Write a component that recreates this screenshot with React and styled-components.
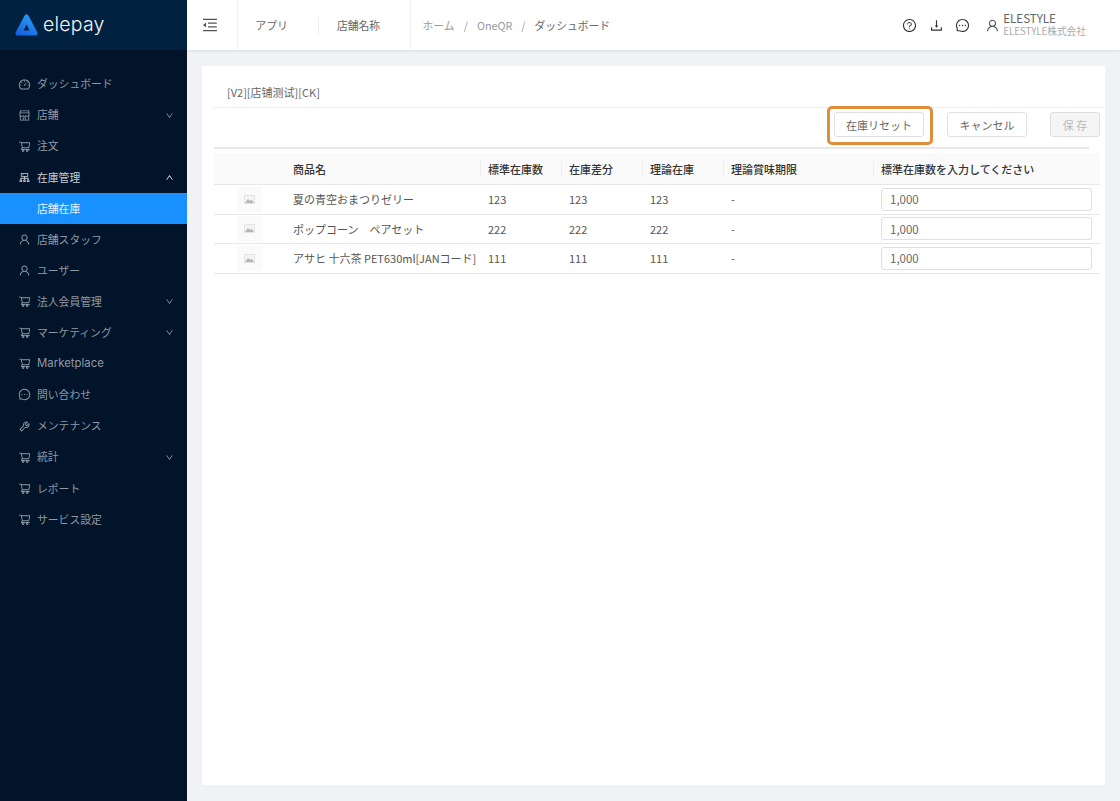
import React from 'react';
import styled, { createGlobalStyle } from 'styled-components';
import {
  AiOutlineDashboard, AiOutlineShop, AiOutlineShoppingCart, AiOutlineCluster, AiOutlineUser,
  AiOutlineMessage, AiOutlineTool, AiOutlineDown, AiOutlineUp, AiOutlineQuestionCircle,
  AiOutlineDownload, AiOutlineMenuFold,
} from 'react-icons/ai';

const Global = createGlobalStyle`
  html, body { margin: 0; padding: 0; height: 100%; }
  body { font-family: "Noto Sans CJK JP", "Noto Sans", sans-serif; background: #f0f2f5; }
  * { box-sizing: border-box; }
`;

const Shell = styled.div`
  display: flex;
  width: 1120px;
  height: 801px;
  overflow: hidden;
`;

const Sidebar = styled.aside`
  width: 187px;
  flex: none;
  background: #011429;
  font-family: Inter, "Noto Sans CJK JP", sans-serif;
`;

const Brand = styled.div`
  height: 50px;
  background: #002140;
  display: flex;
  align-items: center;
  padding-left: 15px;
  gap: 5px;
`;

const BrandName = styled.span`
  font-family: Inter, sans-serif;
  font-size: 19.5px;
  font-weight: 300;
  letter-spacing: 0.2px;
  color: #f2f5f8;
  line-height: 1;
  margin-top: -1px;
`;

const Menu = styled.nav`
  padding-top: 18.5px;
`;

const Item = styled.div`
  height: 31.1px;
  display: flex;
  align-items: center;
  padding: 0 13px 0 ${p => (p.$sub ? 37 : 18)}px;
  font-size: ${p => (p.$latin ? 11.4 : 10.8)}px;
  color: ${p => (p.$active ? '#e6f3ff' : p.$open ? '#c8cdd3' : '#8f99a5')};
  background: ${p => (p.$active ? '#1890ff' : 'transparent')};
`;

const ItemIcon = styled.span`
  width: 19px;
  font-size: 13px;
  display: flex;
  align-items: center;
`;

const ItemLabel = styled.span`
  flex: 1;
  white-space: nowrap;
  margin-top: -1.5px;
`;

const Caret = styled.span`
  display: flex;
  font-size: 9px;
  color: ${p => (p.$open ? '#eef0f2' : '#8f99a5')};
`;

const Main = styled.div`
  flex: 1;
  min-width: 0;
  display: flex;
  flex-direction: column;
`;

const Header = styled.header`
  height: 50px;
  flex: none;
  background: #fff;
  box-shadow: 0 1px 3px rgba(0, 21, 41, 0.1);
  display: flex;
  align-items: center;
  color: #666;
  font-size: 10.8px;
`;

const Toggle = styled.div`
  width: 51px;
  height: 100%;
  display: flex;
  align-items: center;
  justify-content: center;
  padding-right: 5px;
  font-size: 18px;
  color: #555;
  border-right: 1px solid #f0f0f0;
`;

const SwitchGroup = styled.div`
  height: 100%;
  display: flex;
  align-items: center;
  border-right: 1px solid #f0f0f0;
  padding-right: 12px;
`;

const Switch = styled.span`
  padding: 0 17.5px;
  line-height: 17px;
  border-left: ${p => (p.$divided ? '1px solid #efefef' : 'none')};
  margin-left: ${p => (p.$divided ? '13px' : '0')};
`;

const Crumbs = styled.div`
  flex: 1;
  display: flex;
  align-items: center;
  gap: 9px;
  padding-left: 12px;
  color: #999;
`;

const CrumbCurrent = styled.span`
  color: #666;
`;

const Tools = styled.div`
  display: flex;
  align-items: center;
  font-size: 15px;
  color: #333;
  gap: 11.5px;
  margin-right: 1px;
`;

const Account = styled.div`
  display: flex;
  align-items: center;
  margin-left: 14px;
  margin-right: 34px;
  gap: 3px;
`;

const AccountText = styled.div`
  display: flex;
  flex-direction: column;
  line-height: 13px;
  font-size: 11.6px;
  color: #666;
`;

const AccountOrg = styled.span`
  font-size: 9.7px;
  color: #aaa;
`;

const Content = styled.main`
  flex: 1;
  padding: 16px 15px 16px;
  min-height: 0;
`;

const Card = styled.section`
  height: 100%;
  background: #fff;
  padding: 0 0 0 12px;
`;

const CardTitle = styled.div`
  height: 42px;
  padding: 18px 0 0 13px;
  font-size: 11px;
  line-height: 17px;
  color: #666;
  border-bottom: 1px solid #eee;
`;

const Actions = styled.div`
  width: 875px;
  height: 41px;
  border-bottom: 2px solid #e8e8e8;
  display: flex;
  justify-content: flex-end;
  align-items: flex-start;
  padding-top: 4px;
`;

const Button = styled.button`
  height: 25px;
  width: ${p => p.$w}px;
  margin-left: ${p => p.$ml || 0}px;
  flex: none;
  padding: 0;
  font: inherit;
  font-size: 11px;
  border-radius: 3px;
  color: ${p => (p.disabled ? '#b8b8b8' : '#666')};
  border: 1px solid ${p => (p.disabled ? '#dedede' : '#e0e0e0')};
  background: ${p => (p.disabled ? '#f5f5f5' : '#fff')};
`;

const Highlighted = styled.span`
  position: relative;
  display: flex;
  &::after {
    content: '';
    position: absolute;
    left: -7px;
    right: -9px;
    top: -6px;
    bottom: -8px;
    border: 3px solid #e08d3c;
    border-radius: 5px;
    pointer-events: none;
  }
`;

const ActionsEnd = styled.div`
  display: flex;
  margin-right: -11px;
`;

const Table = styled.table`
  width: 886px;
  margin-top: 4px;
  border-collapse: collapse;
  table-layout: fixed;
  font-size: 11px;
  color: #555;
`;

const Th = styled.th`
  height: 31.5px;
  background: #fafafa;
  text-align: left;
  font-weight: 500;
  color: #333;
  padding: 0 0 0 8px;
  border-bottom: 1px solid #e8e8e8;
  position: relative;
  &::before {
    content: '';
    display: ${p => (p.$sep ? 'block' : 'none')};
    position: absolute;
    left: 0;
    top: 8px;
    bottom: 8px;
    width: 1px;
    background: #eee;
  }
`;

const Td = styled.td`
  height: 29.5px;
  padding: 0 0 0 8px;
  border-bottom: 1px solid #e8e8e8;
  white-space: nowrap;
`;

const ThumbCell = styled.td`
  height: 29.5px;
  padding: 0;
  border-bottom: 1px solid #e8e8e8;
`;

const Thumb = styled.div`
  width: 25px;
  height: 25px;
  margin-left: 23px;
  background: #fafafa;
  display: flex;
  align-items: center;
  justify-content: center;
`;

const Qty = styled.input`
  display: block;
  width: 211px;
  height: 23px;
  padding: 0 8px;
  font: inherit;
  font-size: 11.5px;
  color: #666;
  border: 1px solid #dfdfdf;
  border-radius: 3px;
  background: #fff;
`;

const Logo = () => (
  <svg width="23" height="22" viewBox="0 0 23 22" aria-hidden="true">
    <defs>
      <linearGradient id="lg" x1="0.2" y1="1" x2="0.7" y2="0">
        <stop offset="0" stopColor="#1560e0" />
        <stop offset="1" stopColor="#2a9ef7" />
      </linearGradient>
    </defs>
    <path fillRule="evenodd" fill="url(#lg)" d="M11.5 0.5c.9 0 1.6.5 2 1.2l8.8 16.6c.8 1.6-.3 3.2-2 3.2H2.7c-1.7 0-2.8-1.6-2-3.2L9.5 1.7c.4-.7 1.1-1.2 2-1.2zM11.5 10.5l-3 6h6z" />
  </svg>
);

const PictureIcon = () => (
  <svg width="11" height="9" viewBox="0 0 11 9" aria-hidden="true">
    <rect x="0" y="0" width="11" height="9" fill="#e4e4e4" />
    <rect x="1" y="1" width="9" height="7" fill="#f4f4f4" />
    <path d="M1 8l3-4 2 2 1.5-1.5L10 8z" fill="#b5b5b5" />
  </svg>
);

const cart = <AiOutlineShoppingCart />;
const user = <AiOutlineUser />;
const menu = [
  { icon: <AiOutlineDashboard />, label: 'ダッシュボード' },
  { icon: <AiOutlineShop />, label: '店舗', caret: 'down' },
  { icon: cart, label: '注文' },
  { icon: <AiOutlineCluster />, label: '在庫管理', caret: 'up', open: true },
  { label: '店舗在庫', sub: true, active: true },
  { icon: user, label: '店舗スタッフ' },
  { icon: user, label: 'ユーザー' },
  { icon: cart, label: '法人会員管理', caret: 'down' },
  { icon: cart, label: 'マーケティング', caret: 'down' },
  { icon: cart, label: 'Marketplace', latin: true },
  { icon: <AiOutlineMessage />, label: '問い合わせ' },
  { icon: <AiOutlineTool />, label: 'メンテナンス' },
  { icon: cart, label: '統計', caret: 'down' },
  { icon: cart, label: 'レポート' },
  { icon: cart, label: 'サービス設定' },
];

const rows = [
  { name: '夏の青空おまつりゼリー', n: '123' },
  { name: 'ポップコーン　ペアセット', n: '222' },
  { name: 'アサヒ 十六茶 PET630ml[JANコード]', n: '111' },
];

export default function App() {
  return (
    <Shell>
      <Global />
      <Sidebar>
        <Brand>
          <Logo />
          <BrandName>elepay</BrandName>
        </Brand>
        <Menu>
          {menu.map(m => (
            <Item key={m.label} $sub={m.sub} $active={m.active} $open={m.open} $latin={m.latin}>
              {m.icon && <ItemIcon>{m.icon}</ItemIcon>}
              <ItemLabel>{m.label}</ItemLabel>
              {m.caret && <Caret $open={m.open}>{m.caret === 'up' ? <AiOutlineUp /> : <AiOutlineDown />}</Caret>}
            </Item>
          ))}
        </Menu>
      </Sidebar>
      <Main>
        <Header>
          <Toggle><AiOutlineMenuFold /></Toggle>
          <SwitchGroup>
            <Switch>アプリ</Switch>
            <Switch $divided>店舗名称</Switch>
          </SwitchGroup>
          <Crumbs>
            <span>ホーム</span><span>/</span><span>OneQR</span><span>/</span>
            <CrumbCurrent>ダッシュボード</CrumbCurrent>
          </Crumbs>
          <Tools>
            <AiOutlineQuestionCircle />
            <AiOutlineDownload />
            <AiOutlineMessage />
          </Tools>
          <Account>
            <AiOutlineUser size={15} color="#555" />
            <AccountText>
              <span>ELESTYLE</span>
              <AccountOrg>ELESTYLE株式会社</AccountOrg>
            </AccountText>
          </Account>
        </Header>
        <Content>
          <Card>
            <CardTitle>[V2][店铺测试][CK]</CardTitle>
            <Actions>
              <ActionsEnd>
                <Highlighted><Button $w={90}>在庫リセット</Button></Highlighted>
                <Button $w={80} $ml={23}>キャンセル</Button>
                <Button $w={50} $ml={23} disabled>保 存</Button>
              </ActionsEnd>
            </Actions>
            <Table>
              <colgroup>
                <col width="71" /><col width="195" /><col width="81" /><col width="81" />
                <col width="81" /><col width="150" /><col width="227" />
              </colgroup>
              <thead>
                <tr>
                  <Th />
                  <Th>商品名</Th>
                  <Th $sep>標準在庫数</Th>
                  <Th $sep>在庫差分</Th>
                  <Th $sep>理論在庫</Th>
                  <Th $sep>理論賞味期限</Th>
                  <Th $sep>標準在庫数を入力してください</Th>
                </tr>
              </thead>
              <tbody>
                {rows.map(r => (
                  <tr key={r.n}>
                    <ThumbCell><Thumb><PictureIcon /></Thumb></ThumbCell>
                    <Td>{r.name}</Td>
                    <Td>{r.n}</Td>
                    <Td>{r.n}</Td>
                    <Td>{r.n}</Td>
                    <Td>-</Td>
                    <Td><Qty defaultValue="1,000" /></Td>
                  </tr>
                ))}
              </tbody>
            </Table>
          </Card>
        </Content>
      </Main>
    </Shell>
  );
}
